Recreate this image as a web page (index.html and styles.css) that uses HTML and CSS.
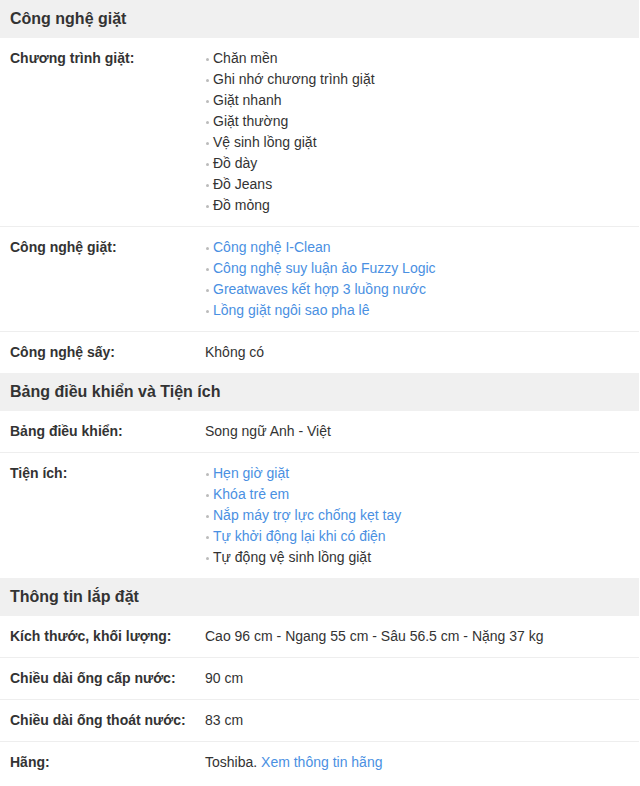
FILE: index.html
```html
<!DOCTYPE html>
<html lang="vi">
<head>
<meta charset="utf-8">
<link rel="stylesheet" href="styles.css">
</head>
<body>
<div class="specs">
  <h3 class="group">Công nghệ giặt</h3>
  <div class="row">
    <div class="label">Chương trình giặt:</div>
    <ul class="value list">
      <li>Chăn mền</li>
      <li>Ghi nhớ chương trình giặt</li>
      <li>Giặt nhanh</li>
      <li>Giặt thường</li>
      <li>Vệ sinh lồng giặt</li>
      <li>Đồ dày</li>
      <li>Đồ Jeans</li>
      <li>Đồ mỏng</li>
    </ul>
  </div>
  <div class="row">
    <div class="label">Công nghệ giặt:</div>
    <ul class="value list">
      <li><a class="link">Công nghệ I-Clean</a></li>
      <li><a class="link">Công nghệ suy luận ảo Fuzzy Logic</a></li>
      <li><a class="link">Greatwaves kết hợp 3 luồng nước</a></li>
      <li><a class="link">Lồng giặt ngôi sao pha lê</a></li>
    </ul>
  </div>
  <div class="row last">
    <div class="label">Công nghệ sấy:</div>
    <div class="value">Không có</div>
  </div>

  <h3 class="group">Bảng điều khiển và Tiện ích</h3>
  <div class="row">
    <div class="label">Bảng điều khiển:</div>
    <div class="value">Song ngữ Anh - Việt</div>
  </div>
  <div class="row last">
    <div class="label">Tiện ích:</div>
    <ul class="value list">
      <li><a class="link">Hẹn giờ giặt</a></li>
      <li><a class="link">Khóa trẻ em</a></li>
      <li><a class="link">Nắp máy trợ lực chống kẹt tay</a></li>
      <li><a class="link">Tự khởi động lại khi có điện</a></li>
      <li>Tự động vệ sinh lồng giặt</li>
    </ul>
  </div>

  <h3 class="group">Thông tin lắp đặt</h3>
  <div class="row">
    <div class="label">Kích thước, khối lượng:</div>
    <div class="value">Cao 96 cm - Ngang 55 cm - Sâu 56.5 cm - Nặng 37 kg</div>
  </div>
  <div class="row">
    <div class="label">Chiều dài ống cấp nước:</div>
    <div class="value">90 cm</div>
  </div>
  <div class="row">
    <div class="label">Chiều dài ống thoát nước:</div>
    <div class="value">83 cm</div>
  </div>
  <div class="row last">
    <div class="label">Hãng:</div>
    <div class="value">Toshiba. <a class="link">Xem thông tin hãng</a></div>
  </div>
</div>
</body>
</html>
```
FILE: styles.css
```css
html, body {
  margin: 0;
  padding: 0;
  background: #fff;
}
body {
  font-family: "Liberation Sans", Arial, sans-serif;
  font-size: 14px;
  color: #333;
}
.specs {
  width: 639px;
}
.group {
  margin: 0;
  height: 38px;
  line-height: 38px;
  padding: 0 10px;
  background: #f0f0f0;
  font-size: 16px;
  font-weight: bold;
  color: #333;
}
.row {
  display: grid;
  grid-template-columns: 195px 1fr;
  padding: 10px 10px;
  line-height: 21px;
  border-bottom: 1px solid #eee;
}
.row.last {
  border-bottom: none;
}
.label {
  font-weight: bold;
}
.value {
  margin: 0;
}
.list {
  list-style: none;
  padding: 0;
}
.list li {
  display: flex;
  align-items: center;
}
.list li::before {
  content: "";
  width: 3px;
  height: 3px;
  border-radius: 50%;
  background: #bbb;
  margin: 1px 4px 0 1px;
}
.link {
  color: #4a90e2;
  text-decoration: none;
}
```
